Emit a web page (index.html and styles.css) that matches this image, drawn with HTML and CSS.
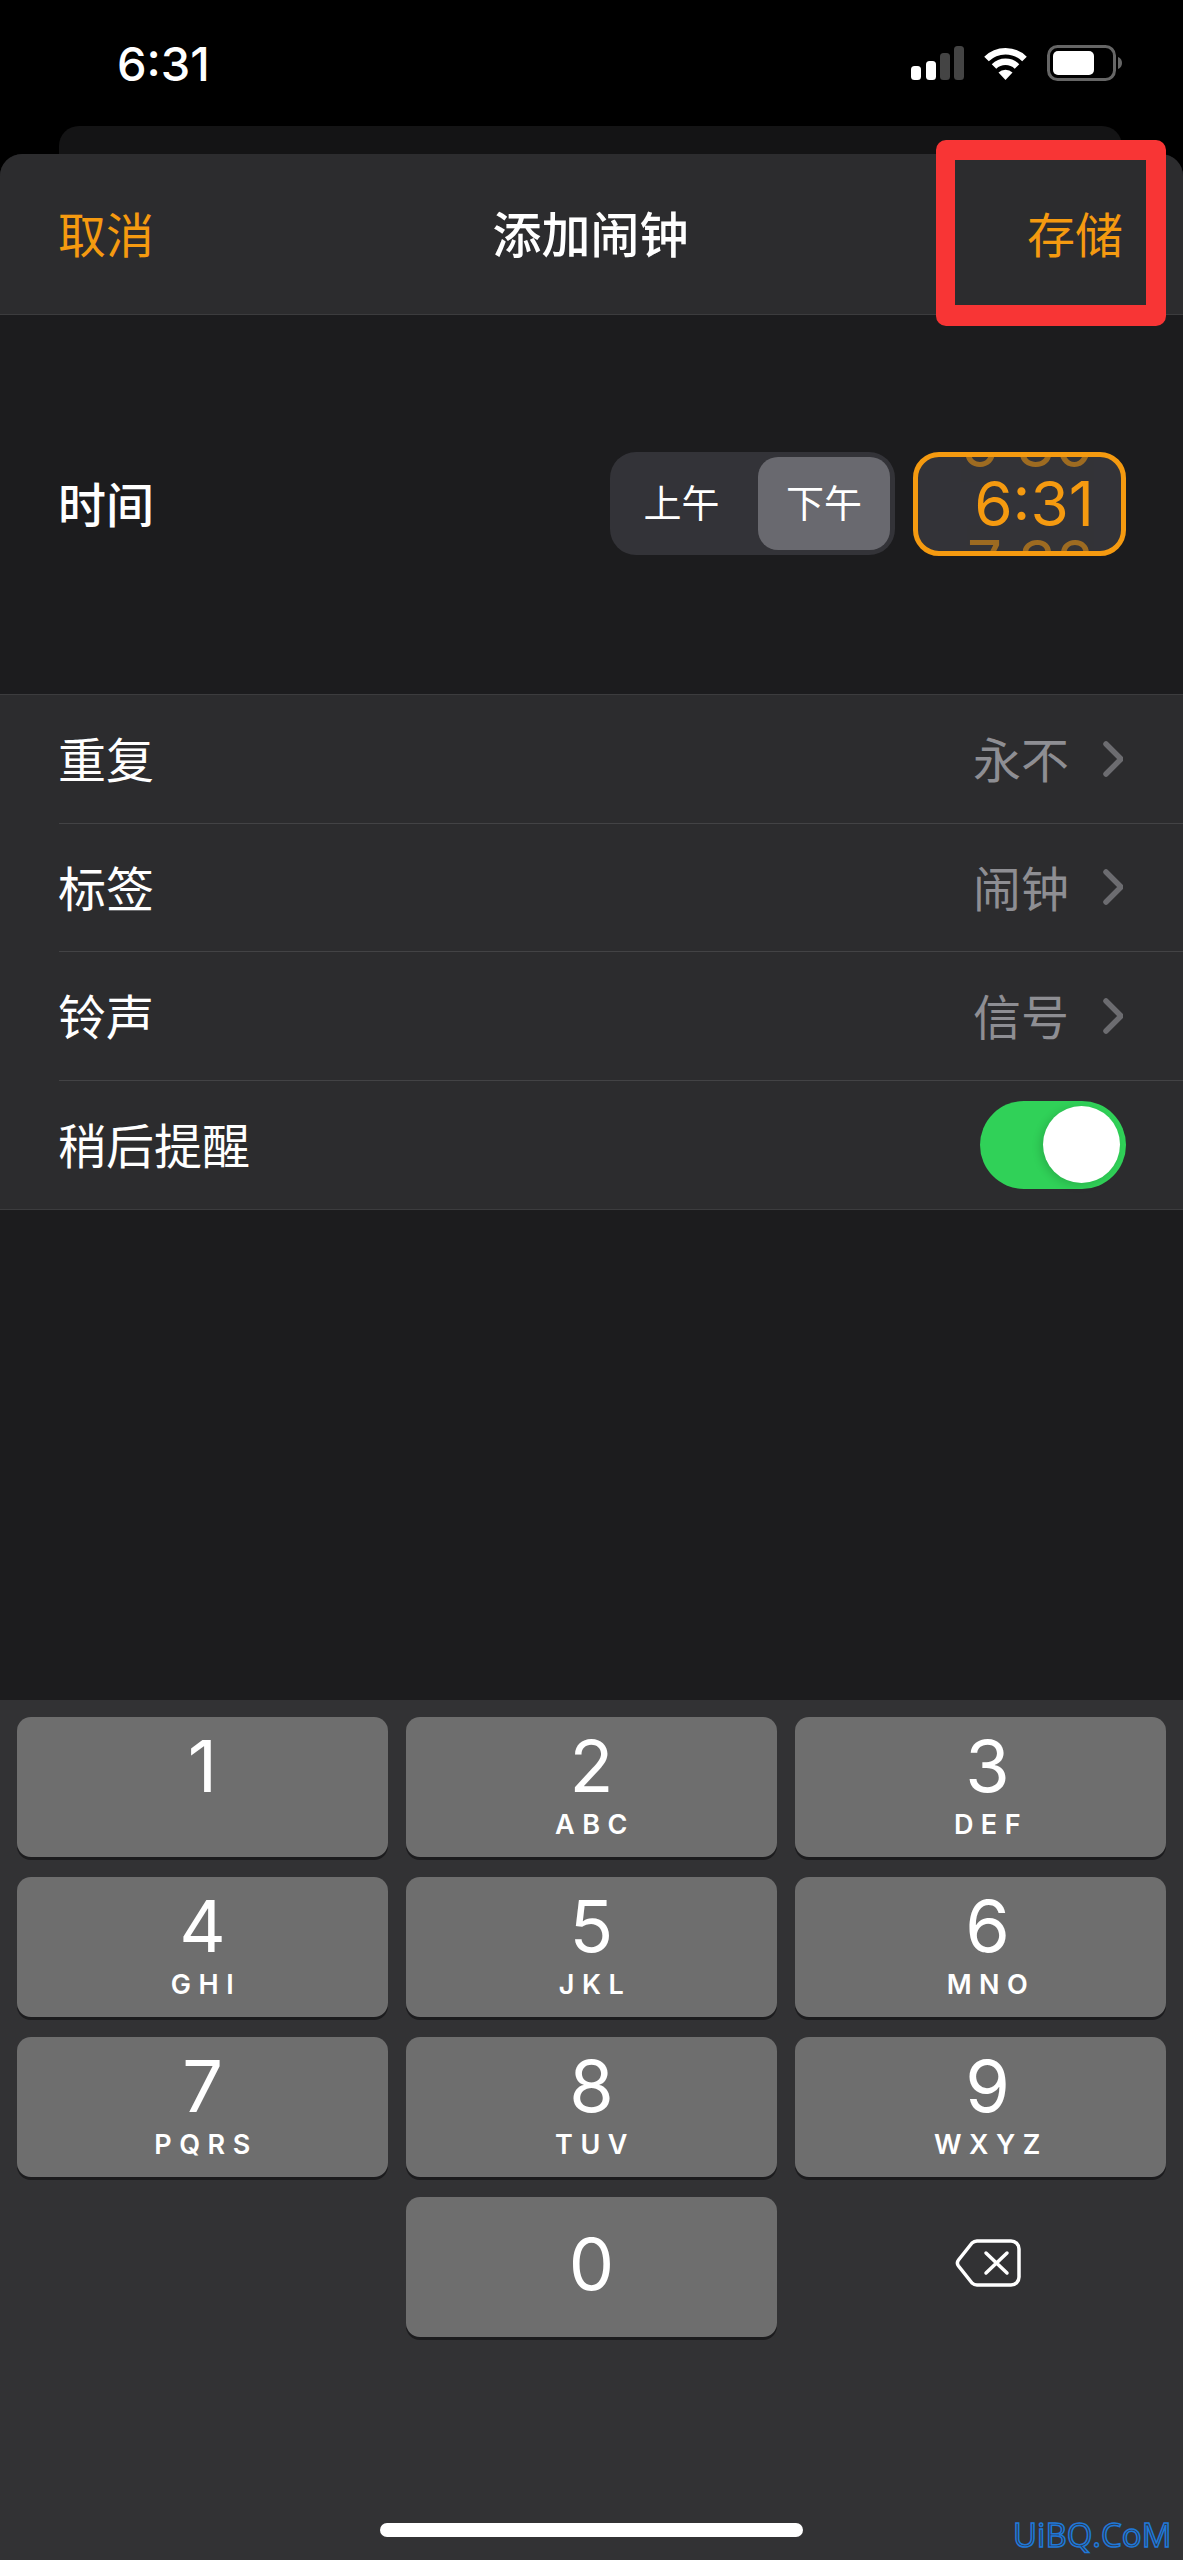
FILE: index.html
```html
<!DOCTYPE html>
<html lang="zh-CN">

<head>
    <meta charset="UTF-8">
    <meta name="viewport" content="width=device-width, initial-scale=1.0">
    <title>添加闹钟</title>
    <link rel="stylesheet" href="styles.css">
</head>

<body>

    <div class="status-bar">
        <span class="status-time">6:31</span>
        <div class="status-icons">
            <svg class="icon-signal" width="53" height="34" viewBox="0 0 53 34">
                <rect x="0" y="20" width="10" height="14" rx="3.5" fill="#fff"></rect>
                <rect x="15" y="15" width="10" height="19" rx="3.5" fill="#fff"></rect>
                <rect x="29" y="7" width="10" height="27" rx="3.5" fill="#444"></rect>
                <rect x="43" y="0" width="10" height="34" rx="3.5" fill="#444"></rect>
            </svg>
            <svg class="icon-wifi" width="45" height="34" viewBox="0 0 45 34">
                <path d="M3.5 13 A27 27 0 0 1 41.500 13" fill="none" stroke="#fff" stroke-width="6.500"></path>
                <path d="M11 20.500 A16.500 16.500 0 0 1 34 20.500" fill="none" stroke="#fff" stroke-width="6.500"></path>
                <path d="M15.500 26.500 A10 10 0 0 1 29.500 26.500 L22.500 34 Z" fill="#fff"></path>
            </svg>
            <svg class="icon-battery" width="75" height="36" viewBox="0 0 75 36">
                <rect x="1.500" y="1.500" width="66" height="33" rx="9" fill="none" stroke="#666" stroke-width="3"></rect>
                <rect x="6" y="6" width="41" height="24" rx="5" fill="#fff"></rect>
                <path d="M71 12 C74 13 75 15.500 75 18 C75 20.500 74 23 71 24 Z" fill="#666"></path>
            </svg>
        </div>
    </div>

    <div class="back-card"></div>

    <div class="sheet">
        <div class="sheet-header">
            <span class="action">取消</span>
            <span class="sheet-title">添加闹钟</span>
            <span class="action">存储</span>
        </div>

        <div class="time-section">
            <span class="time-label">时间</span>
            <div class="time-controls">
                <div class="segment">
                    <span class="segment-item">上午</span>
                    <span class="segment-item selected">下午</span>
                </div>
                <div class="time-wheel">
                    <span class="wheel-line ghost">5<span class="colon-gap">:</span>30</span>
                    <span class="wheel-line">6:31</span>
                    <span class="wheel-line ghost">7<span class="colon-gap">:</span>32</span>
                </div>
            </div>
        </div>

        <div class="settings">
            <div class="row">
                <span class="row-label">重复</span>
                <span class="row-value">永不</span>
                <svg class="chevron" width="22" height="36" viewBox="0 0 22 36"><path d="M5 3 L20 18 L5 33" fill="none" stroke="#6c6c70" stroke-width="5.500" stroke-linecap="round" stroke-linejoin="round"></path></svg>
            </div>
            <div class="row">
                <span class="row-label">标签</span>
                <span class="row-value">闹钟</span>
                <svg class="chevron" width="22" height="36" viewBox="0 0 22 36"><path d="M5 3 L20 18 L5 33" fill="none" stroke="#6c6c70" stroke-width="5.500" stroke-linecap="round" stroke-linejoin="round"></path></svg>
            </div>
            <div class="row">
                <span class="row-label">铃声</span>
                <span class="row-value">信号</span>
                <svg class="chevron" width="22" height="36" viewBox="0 0 22 36"><path d="M5 3 L20 18 L5 33" fill="none" stroke="#6c6c70" stroke-width="5.500" stroke-linecap="round" stroke-linejoin="round"></path></svg>
            </div>
            <div class="row last">
                <span class="row-label">稍后提醒</span>
                <div class="toggle"><div class="knob"></div></div>
            </div>
        </div>

        <div class="filler"></div>

        <div class="keyboard">
            <div class="keypad">
                <div class="key"><span class="digit">1</span></div>
                <div class="key"><span class="digit">2</span><span class="letters">ABC</span></div>
                <div class="key key-right"><span class="digit">3</span><span class="letters">DEF</span></div>
                <div class="key"><span class="digit">4</span><span class="letters">GHI</span></div>
                <div class="key"><span class="digit">5</span><span class="letters">JKL</span></div>
                <div class="key key-right"><span class="digit">6</span><span class="letters">MNO</span></div>
                <div class="key"><span class="digit">7</span><span class="letters">PQRS</span></div>
                <div class="key"><span class="digit">8</span><span class="letters">TUV</span></div>
                <div class="key key-right"><span class="digit">9</span><span class="letters">WXYZ</span></div>
                <div class="key-empty"></div>
                <div class="key key-zero"><span class="digit">0</span></div>
                <div class="key-delete">
                    <svg width="66" height="48" viewBox="0 0 66 48">
                        <path d="M22 2 H56 A8 8 0 0 1 64 10 V38 A8 8 0 0 1 56 46 H22 A8 8 0 0 1 17 44 L3.500 27 A5 5 0 0 1 3.500 21 L17 4 A8 8 0 0 1 22 2 Z" fill="none" stroke="#fff" stroke-width="3.500" stroke-linejoin="round"></path>
                        <path d="M31 14 L52 34 M52 14 L31 34" fill="none" stroke="#fff" stroke-width="3.500" stroke-linecap="round"></path>
                    </svg>
                </div>
            </div>
            <div class="home-bar"></div>
        </div>
    </div>

    <!-- annotation and watermark sit on top of the screenshot -->
    <div class="highlight-box"></div>
    <div class="watermark">UiBQ.CoM</div>

</body>

</html>
```

FILE: styles.css
```css
* {
    box-sizing: border-box;
}

body {
    position: relative;
    width: 1183px;
    height: 2560px;
    margin: 0;
    overflow: hidden;
    background-color: #000;
    color: #fff;
    font-family: 'Noto Sans CJK SC', 'Noto Sans', sans-serif;
}

.status-bar {
    display: flex;
    justify-content: space-between;
    align-items: center;
    height: 126px;
    padding: 0 61px 0 117px;
}

.status-time {
    font-family: 'Inter', sans-serif;
    font-size: 47px;
    font-weight: 500;
}

.status-icons {
    display: flex;
    align-items: center;
    gap: 19px;
}

.back-card {
    height: 28px;
    margin: 0 61px 0 59px;
    background-color: #141415;
    border-radius: 20px 20px 0 0;
}

.sheet {
    display: flex;
    flex-direction: column;
    height: 2406px;
    background-color: #1c1c1e;
    border-radius: 22px 22px 0 0;
    overflow: hidden;
}

.sheet-header {
    display: flex;
    justify-content: space-between;
    align-items: center;
    height: 161px;
    padding: 0 60px 5px 58px;
    background-color: #2c2c2e;
    border-bottom: 1px solid #3c3c3e;
}

.action {
    color: #f59a10;
    font-size: 48px;
}

.sheet-title {
    font-size: 49px;
    font-weight: 500;
}

.time-section {
    display: flex;
    justify-content: space-between;
    align-items: center;
    height: 379px;
    padding: 0 57px 2px 58px;
}

.time-label {
    padding-bottom: 3px;
    font-size: 48px;
    font-weight: 500;
}

.time-controls {
    display: flex;
    align-items: center;
    gap: 18px;
}

.segment {
    display: flex;
    width: 285px;
    height: 103px;
    padding: 5px;
    background-color: #333338;
    border-radius: 26px;
}

.segment-item {
    display: flex;
    flex: 1;
    align-items: center;
    justify-content: center;
    padding: 0 10px 6px 0;
    font-size: 38px;
}

.segment-item.selected {
    flex: 0 0 132px;
    padding: 0 0 6px;
    background-color: #69696f;
    border-radius: 20px;
}

.time-wheel {
    display: flex;
    flex-direction: column;
    align-items: flex-end;
    justify-content: center;
    width: 213px;
    height: 104px;
    padding-right: 27px;
    overflow: hidden;
    background-color: #333338;
    border: 5px solid #f59a10;
    border-radius: 26px;
    color: #f59a10;
    font-family: 'Inter', sans-serif;
    font-size: 62px;
}

.wheel-line {
    flex: none;
    height: 59px;
    line-height: 59px;
}

.colon-gap {
    visibility: hidden;
}

.ghost {
    opacity: 0.55;
}

.settings {
    background-color: #2c2c2e;
    border-top: 1px solid #3c3c3e;
    border-bottom: 1px solid #3c3c3e;
}

.row {
    display: flex;
    align-items: center;
    height: 128.500px;
    margin-left: 59px;
    padding-right: 60px;
    border-bottom: 1px solid #434345;
}

.row.last {
    padding-right: 57px;
    border-bottom: none;
}

.row-label {
    flex: 1;
    margin-left: -1px;
    padding-bottom: 3px;
    font-size: 48px;
}

.row-value {
    margin-right: 32px;
    padding-bottom: 3px;
    color: #8e8e93;
    font-size: 48px;
}

.toggle {
    display: flex;
    align-items: center;
    justify-content: flex-end;
    width: 146px;
    height: 88px;
    padding-right: 6px;
    background-color: #30d158;
    border-radius: 44px;
}

.knob {
    width: 77px;
    height: 77px;
    background-color: #fff;
    border-radius: 50%;
    box-shadow: -3px 2px 8px rgba(0, 0, 0, 0.15);
}

.filler {
    flex: 1;
}

.keyboard {
    display: flex;
    flex-direction: column;
    align-items: center;
    height: 860px;
    padding: 17px 17px 23px;
    background-color: #323234;
}

.keypad {
    display: grid;
    grid-template-columns: repeat(3, 1fr);
    grid-auto-rows: 140px;
    gap: 20px 18px;
    width: 100%;
}

.key {
    display: flex;
    flex-direction: column;
    align-items: center;
    background-color: #6e6e6e;
    border-radius: 14px;
    box-shadow: 0 3px 0 #1c1c1e;
}

.key-right {
    padding-left: 14px;
}

.digit {
    height: 76px;
    margin-top: 11px;
    font-family: 'Inter', sans-serif;
    font-size: 72px;
    font-weight: 400;
    line-height: 76px;
}

.letters {
    margin-top: 5px;
    padding-left: 7px;
    font-family: 'Inter', sans-serif;
    font-size: 27px;
    font-weight: 600;
    line-height: 32px;
    letter-spacing: 7.500px;
}

.key-zero .digit {
    margin-top: 29px;
}

.key-delete {
    display: flex;
    align-items: center;
    justify-content: center;
    padding: 0 0 8px 14px;
}

.home-bar {
    width: 423px;
    height: 14px;
    margin-top: auto;
    background-color: #fff;
    border-radius: 7px;
}

.highlight-box {
    position: absolute;
    top: 140px;
    left: 936px;
    width: 230px;
    height: 186px;
    border-style: solid;
    border-color: #f83535;
    border-width: 20px 20px 21px 19px;
    border-radius: 10px;
}

.watermark {
    position: absolute;
    top: 2514px;
    left: 1013px;
    color: #2d3a4a;
    font-family: 'Open Sans', sans-serif;
    font-size: 33px;
    line-height: 42px;
    -webkit-text-stroke: 1.500px #1f78d8;
}
```
